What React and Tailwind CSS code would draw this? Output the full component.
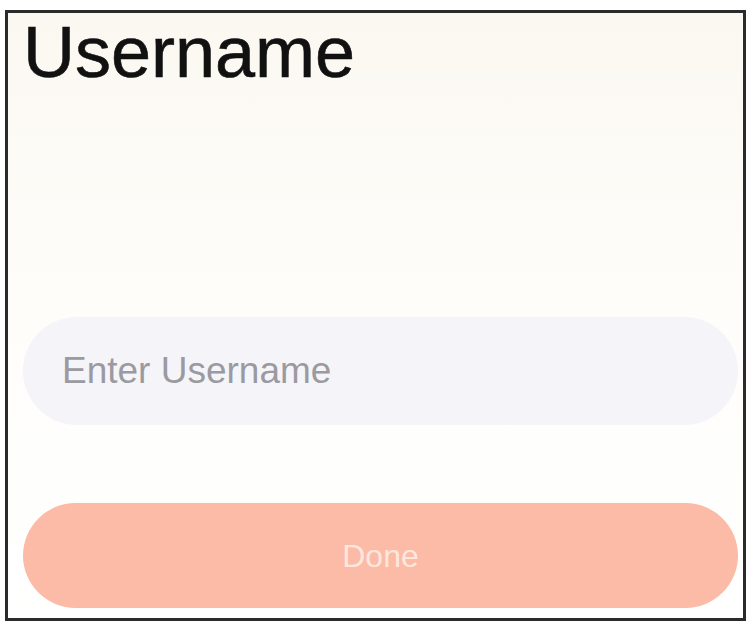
export default function App() {
  return (
    <div className="min-h-[621px] w-[748px] bg-white pl-[5px] pt-[10px]" style={{ fontFamily: '"Liberation Sans", Arial, sans-serif' }}>
      <div className="flex h-[611px] w-[741px] flex-col border-[3px] border-[#2b2b2b] bg-linear-to-b from-[#fbf8f1] via-[#fefdfa] via-45% to-white pl-[15px] pr-[5px] pt-[3px]">
        <h1 className="text-[72px] leading-none font-normal text-[#111] [-webkit-text-stroke:0.6px_#111]">Username</h1>
        <div className="mt-[229px] flex h-[108px] items-center rounded-full bg-[#f5f5f9] pl-[39px]">
          <input
            className="w-full bg-transparent text-[37px] text-[#333] outline-none placeholder:text-[#9a9aa0]"
            placeholder="Enter Username"
          />
        </div>
        <button className="mt-[78px] h-[105px] w-full rounded-full bg-[#fbbba7] text-[32px] text-[#fde7dc]">Done</button>
      </div>
    </div>
  )
}
